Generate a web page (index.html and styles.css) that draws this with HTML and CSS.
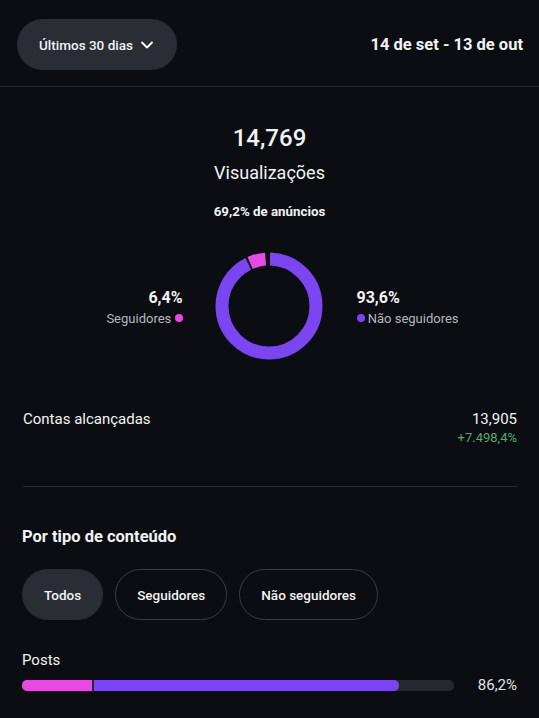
FILE: index.html
```html
<!DOCTYPE html>
<html lang="pt">
<head>
    <meta charset="UTF-8">
    <meta name="viewport" content="width=device-width, initial-scale=1.0">
    <title>Insights</title>
    <link rel="stylesheet" href="styles.css">
</head>
<body>
    <!-- Period header -->
    <div class="top-bar">
        <button class="period-btn">
            Últimos 30 dias
            <svg width="14" height="14" viewBox="0 0 14 14"><path d="M2 4.5 L7 9.5 L12 4.5" fill="none" stroke="#fff" stroke-width="1.8" stroke-linecap="round" stroke-linejoin="round"/></svg>
        </button>
        <div class="date-range">14 de set - 13 de out</div>
    </div>

    <!-- Views summary -->
    <div class="summary">
        <div class="big-number">14,769</div>
        <div class="big-label">Visualizações</div>
        <div class="ads-note">69,2% de anúncios</div>

        <div class="donut-row">
            <div class="legend legend-left">
                <div class="legend-value">6,4%</div>
                <div class="legend-label">Seguidores <span class="dot dot-pink"></span></div>
            </div>
            <svg class="donut" width="108" height="108" viewBox="0 0 108 108">
                <g transform="rotate(-90 54 54)">
                    <circle cx="54" cy="54" r="47" fill="none" stroke="#7b45f1" stroke-width="13"
                        stroke-dasharray="272.4 295.3" stroke-dashoffset="-1"/>
                    <circle cx="54" cy="54" r="47" fill="none" stroke="#e64ae2" stroke-width="13"
                        stroke-dasharray="15.9 295.3" stroke-dashoffset="-275.4"/>
                </g>
            </svg>
            <div class="legend legend-right">
                <div class="legend-value">93,6%</div>
                <div class="legend-label"><span class="dot dot-purple"></span> Não seguidores</div>
            </div>
        </div>
    </div>

    <div class="stat-row">
        <div class="stat-name">Contas alcançadas</div>
        <div class="stat-values">
            <div class="stat-number">13,905</div>
            <div class="stat-change">+7.498,4%</div>
        </div>
    </div>

    <div class="section">
        <h3>Por tipo de conteúdo</h3>
        <div class="chips">
            <button class="chip active">Todos</button>
            <button class="chip">Seguidores</button>
            <button class="chip">Não seguidores</button>
        </div>

        <div class="bar-item">
            <div class="bar-name">Posts</div>
            <div class="bar-line">
                <div class="bar-track">
                    <div class="bar-pink" style="width: 16.2%"></div>
                    <div class="bar-purple" style="width: 70.6%"></div>
                </div>
                <div class="bar-pct">86,2%</div>
            </div>
        </div>
    </div>
</body>
</html>
```

FILE: styles.css
```css
body {
    font-family: 'Roboto', 'Liberation Sans', sans-serif;
    margin: 0;
    padding: 0;
    background: #0b0d12;
    color: #f2f3f5;
    width: 539px;
    height: 718px;
    overflow: hidden;
}
button {
    font-family: inherit;
    color: #f2f3f5;
    cursor: pointer;
}
.top-bar {
    display: flex;
    justify-content: space-between;
    align-items: center;
    padding: 19px 16px 16px 17px;
    border-bottom: 1px solid #25282e;
}
.period-btn {
    display: flex;
    align-items: center;
    gap: 7px;
    height: 51px;
    padding: 0 23px 0 22px;
    background: #2a2d33;
    border: none;
    border-radius: 26px;
    font-size: 13.5px;
    font-weight: 500;
}
.date-range {
    font-size: 16.5px;
    font-weight: 700;
}
.summary {
    text-align: center;
    padding-top: 36px;
}
.big-number {
    font-size: 24px;
    font-weight: 500;
    line-height: 30px;
}
.big-label {
    font-size: 18px;
    margin-top: 8px;
    line-height: 24px;
}
.ads-note {
    font-size: 13.3px;
    font-weight: 700;
    margin-top: 19px;
    line-height: 16px;
}
.donut-row {
    display: flex;
    justify-content: center;
    align-items: center;
    gap: 32px;
    margin-top: 32px;
}
.donut {
    display: block;
}
.legend {
    width: 120px;
    margin-top: 2px;
}
.legend-left {
    text-align: right;
    margin-left: -42px;
}
.legend-right {
    text-align: left;
    margin-right: -42px;
    margin-left: 2px;
}
.legend-value {
    font-size: 16px;
    font-weight: 700;
    line-height: 20px;
}
.legend-label {
    font-size: 13px;
    color: #b4b7bd;
    margin-top: 3px;
    white-space: nowrap;
}
.dot {
    display: inline-block;
    width: 8px;
    height: 8px;
    border-radius: 50%;
    vertical-align: 1px;
}
.dot-pink {
    background: #e64ae2;
}
.dot-purple {
    background: #7b45f1;
}
.stat-row {
    display: flex;
    justify-content: space-between;
    margin: 49px 22px 0 23px;
    padding-bottom: 41px;
    border-bottom: 1px solid #2a2d33;
}
.stat-name {
    font-size: 15px;
    line-height: 20px;
}
.stat-values {
    text-align: right;
}
.stat-number {
    font-size: 15px;
    line-height: 20px;
}
.stat-change {
    font-size: 13px;
    color: #4caf6e;
    margin-top: 1px;
}
.section {
    padding: 0 22px;
}
h3 {
    margin: 39px 0 0;
    font-size: 16.5px;
    font-weight: 700;
    line-height: 22px;
}
.chips {
    display: flex;
    gap: 12px;
    margin-top: 21px;
}
.chip {
    height: 51px;
    padding: 0 21px;
    border-radius: 26px;
    background: transparent;
    border: 1px solid #3a3d44;
    font-size: 13.5px;
    font-weight: 500;
}
.chip.active {
    background: #2a2d33;
    border-color: #2a2d33;
}
.bar-item {
    margin-top: 30px;
}
.bar-name {
    font-size: 15px;
    line-height: 20px;
}
.bar-line {
    display: flex;
    align-items: center;
    gap: 24px;
    margin-top: 6px;
}
.bar-track {
    flex: 1;
    display: flex;
    gap: 2px;
    height: 11px;
    background: #25282e;
    border-radius: 5px;
    overflow: hidden;
}
.bar-pink {
    background: #e64ae2;
}
.bar-purple {
    background: #7b45f1;
    border-radius: 0 5px 5px 0;
}
.bar-pct {
    font-size: 15px;
    color: #e0e2e6;
}
```
